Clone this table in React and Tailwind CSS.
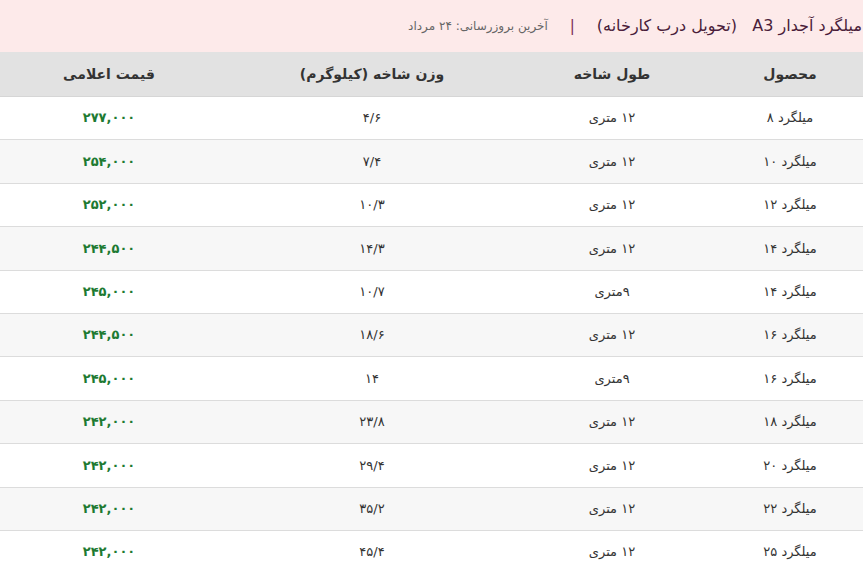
import React from 'react';

const rows = [
  ['میلگرد ۸', '۱۲ متری', '۴/۶', '۲۷۷,۰۰۰'],
  ['میلگرد ۱۰', '۱۲ متری', '۷/۴', '۲۵۴,۰۰۰'],
  ['میلگرد ۱۲', '۱۲ متری', '۱۰/۳', '۲۵۲,۰۰۰'],
  ['میلگرد ۱۴', '۱۲ متری', '۱۴/۳', '۲۴۴,۵۰۰'],
  ['میلگرد ۱۴', '۹متری', '۱۰/۷', '۲۴۵,۰۰۰'],
  ['میلگرد ۱۶', '۱۲ متری', '۱۸/۶', '۲۴۴,۵۰۰'],
  ['میلگرد ۱۶', '۹متری', '۱۴', '۲۴۵,۰۰۰'],
  ['میلگرد ۱۸', '۱۲ متری', '۲۳/۸', '۲۴۲,۰۰۰'],
  ['میلگرد ۲۰', '۱۲ متری', '۲۹/۴', '۲۴۲,۰۰۰'],
  ['میلگرد ۲۲', '۱۲ متری', '۳۵/۲', '۲۴۲,۰۰۰'],
  ['میلگرد ۲۵', '۱۲ متری', '۴۵/۴', '۲۴۲,۰۰۰'],
];

// column template, right to left: product, length, weight, price
const cols = 'grid grid-cols-[146px_210px_289px_218px]';

export default function App() {
  return (
    <div dir="rtl" className="w-[863px] h-[562px] overflow-hidden bg-white font-['DejaVu_Sans',sans-serif]">
      <div className="h-[52px] bg-[#fdeaea] flex items-center gap-[22px] pr-[1px] whitespace-nowrap">
        <span className="text-[16px] text-[#4a1d3a]">میلگرد آجدار A3 &nbsp; (تحویل درب کارخانه)</span>
        <span className="text-[15px] text-[#7a2a55]">|</span>
        <span className="text-[12px] text-[#666]">آخرین بروزرسانی: ۲۴ مرداد</span>
      </div>

      <div className={`${cols} h-[45px] bg-[#e2e2e2] items-center text-[14px] font-bold text-[#333] border-b border-[#d6d6d6]`}>
        <div className="text-center">محصول</div>
        <div className="text-center">طول شاخه</div>
        <div className="text-center pl-[19px]">وزن شاخه (کیلوگرم)</div>
        <div className="text-center">قیمت اعلامی</div>
      </div>

      {rows.map((r, i) => (
        <div
          key={i}
          className={`${cols} h-[43.4px] items-center text-[13px] text-[#333] border-b border-[#dcdcdc] ${i % 2 ? 'bg-[#f7f7f7]' : 'bg-white'}`}
        >
          <div className="text-center">{r[0]}</div>
          <div className="text-center">{r[1]}</div>
          <div className="text-center pl-[19px]">{r[2]}</div>
          <div className="text-center font-bold text-[#1d7a32]">{r[3]}</div>
        </div>
      ))}
    </div>
  );
}
